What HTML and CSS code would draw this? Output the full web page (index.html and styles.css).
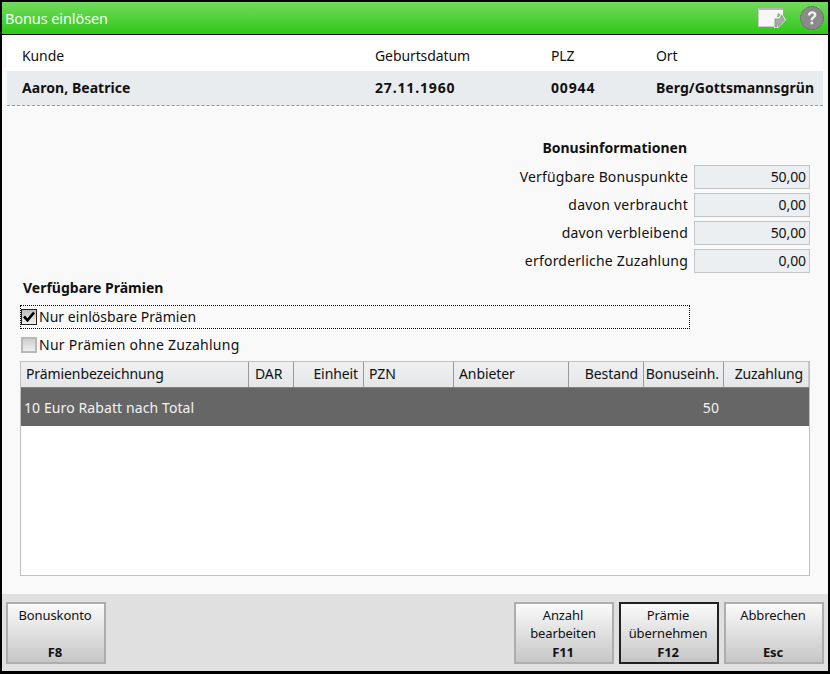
FILE: index.html
```html
<!DOCTYPE html>
<html lang="de">
<head>
<meta charset="utf-8">
<title>Bonus einlösen</title>
<link rel="stylesheet" href="styles.css">
</head>
<body>
<div class="window">
  <header class="titlebar">
    <span class="title">Bonus einlösen</span>
    <div class="title-icons">
      <svg class="ico-note" width="28" height="21" viewBox="0 0 28 21">
        <path d="M0 0H25V8L20 5 19 9H16V19H0z" fill="#f7f7f7"/>
        <path d="M0 0H25V2H0z" fill="#b4b4b4"/>
        <path d="M0 18.500H16M.5 0V19" fill="none" stroke="#c9c9c9"/>
        <path d="M16 20V9H21L23 4 28 12 20 20z" fill="#eee"/>
        <path d="M17 19V11H22L23.500 7 26.500 12 20.500 18.500 19.500 15H19V19z" fill="#a9a9a9" stroke="#8a8a8a" stroke-width=".7"/>
      </svg>
      <svg class="ico-help" width="24" height="24" viewBox="0 0 24 24">
        <circle cx="12" cy="12" r="11.500" fill="#8a8a8a" stroke="#5f5f5f" stroke-dasharray="1.500 1"/>
        <path d="M7.800 9.200C8 6.500 9.800 5.200 12.200 5.200c2.500 0 4.200 1.400 4.200 3.500 0 3-3.400 3-3.400 5.600h-2.400c0-3.600 3.200-3.600 3.200-5.400 0-.9-.7-1.500-1.700-1.500-1.100 0-1.700.7-1.800 2.300z" fill="#f0f0f0"/>
        <rect x="10.600" y="15.600" width="2.600" height="2.700" fill="#f0f0f0"/>
      </svg>
    </div>
  </header>

  <main class="content">
    <section class="customer">
      <div class="customer-head">
        <span class="c-name">Kunde</span><span class="c-date">Geburtsdatum</span><span class="c-zip">PLZ</span><span class="c-city">Ort</span>
      </div>
      <div class="customer-row">
        <span class="c-name">Aaron, Beatrice</span><span class="c-date num">27.11.1960</span><span class="c-zip num">00944</span><span class="c-city">Berg/Gottsmannsgrün</span>
      </div>
    </section>

    <section class="info">
      <h2 class="info-title">Bonusinformationen</h2>
      <div class="info-grid">
        <label class="tight">Verfügbare Bonuspunkte</label><output>50,00</output>
        <label>davon verbraucht</label><output>0,00</output>
        <label>davon verbleibend</label><output>50,00</output>
        <label>erforderliche Zuzahlung</label><output>0,00</output>
      </div>
    </section>

    <section class="rewards">
      <h2 class="rewards-title">Verfügbare Prämien</h2>
      <div class="check focused">
        <span class="box">
          <svg width="14" height="14" viewBox="0 0 14 14"><path d="M2 6.500l3.500 3.800L12 2.500" fill="none" stroke="#000" stroke-width="2.600"/></svg>
        </span>
        <span class="check-label">Nur einlösbare Prämien</span>
      </div>
      <div class="check">
        <span class="box"></span>
        <span class="check-label">Nur Prämien ohne Zuzahlung</span>
      </div>

      <div class="table">
        <div class="thead">
          <span class="col1">Prämienbezeichnung</span>
          <span class="col2">DAR</span>
          <span class="col3 r">Einheit</span>
          <span class="col4">PZN</span>
          <span class="col5">Anbieter</span>
          <span class="col6 r">Bestand</span>
          <span class="col7 r">Bonuseinh.</span>
          <span class="col8 r">Zuzahlung</span>
        </div>
        <div class="trow">
          <span class="col1">10 Euro Rabatt nach Total</span>
          <span class="col2"></span>
          <span class="col3"></span>
          <span class="col4"></span>
          <span class="col5"></span>
          <span class="col6"></span>
          <span class="col7 r">50</span>
          <span class="col8"></span>
        </div>
      </div>
    </section>
  </main>

  <footer class="footer">
    <button class="btn"><span>Bonuskonto</span><b>F8</b></button>
    <div class="spacer"></div>
    <button class="btn"><span>Anzahl<br>bearbeiten</span><b>F11</b></button>
    <button class="btn primary"><span>Prämie<br>übernehmen</span><b>F12</b></button>
    <button class="btn"><span>Abbrechen</span><b>Esc</b></button>
  </footer>
</div>
</body>
</html>
```

FILE: styles.css
```css
* { box-sizing: border-box; }
html, body { margin: 0; height: 100%; }
body {
  font-family: "Noto Sans", "Open Sans", "Liberation Sans", sans-serif;
  font-size: 14px;
  letter-spacing: -0.1px;
  color: #111;
  background: #000;
}
.window {
  width: 830px;
  height: 674px;
  border: 2px solid #000;
  border-bottom-width: 3px;
  display: flex;
  flex-direction: column;
  background: #f9f9f9;
}
.titlebar {
  height: 33px;
  flex: none;
  border-bottom: 1px solid #000;
  background: linear-gradient(#74da60, #2fc718);
  display: flex;
  align-items: center;
  justify-content: space-between;
  padding: 0 4px 1px 3px;
}
.title { color: #f4fff0; font-size: 14.5px; }
.title-icons { display: flex; align-items: center; gap: 14px; }
.ico-note, .ico-help { display: block; }
.ico-note { margin-top: 2px; }

.content { flex: 1; display: flex; flex-direction: column; min-height: 0; }
.customer {
  margin: 5px 5px 0;
  height: 68px;
  background: #fff;
  flex: none;
}
.customer-head, .customer-row {
  display: flex;
  padding-left: 15px;
  align-items: center;
}
.customer-head { height: 31px; }
.customer-row {
  height: 35px;
  padding-bottom: 2px;
  background: #e9ecef;
  font-weight: 700;
  letter-spacing: 0.05px;
  border-bottom: 1px dashed #999;
}
.c-name { width: 353px; }
.c-date { width: 176px; }
.c-zip { width: 105px; }
.c-city { white-space: nowrap; }
.num { letter-spacing: 0.85px; }

.info {
  margin-top: 30px;
  padding-right: 18px;
  display: flex;
  flex-direction: column;
  align-items: flex-end;
  flex: none;
}
.info-title {
  margin: 0 123px 7px 0;
  font-size: 14px;
  line-height: 20px;
  font-weight: 700;
  letter-spacing: 0;
}
.info-grid {
  display: grid;
  grid-template-columns: auto 116px;
  column-gap: 6px;
  row-gap: 4px;
}
.info-grid label { text-align: right; line-height: 24px; letter-spacing: 0.22px; }
.info-grid label.tight { letter-spacing: 0.13px; }
.info-grid output {
  height: 24px;
  line-height: 22px;
  text-align: right;
  background: #eceff1;
  border: 1px solid #c4c4c4;
  padding-right: 3px;
}

.rewards { padding: 5px 18px 0; display: flex; flex-direction: column; flex: 1; min-height: 0; }
.rewards-title {
  margin: 0 0 7px 3px;
  font-size: 14px;
  line-height: 20px;
  font-weight: 700;
  letter-spacing: 0;
}
.check {
  display: flex;
  align-items: center;
  gap: 2px;
  height: 24px;
  width: 670px;
  padding-left: 0;
  margin-bottom: 4px;
  border: 1px dotted transparent;
}
.check.focused { border-color: #000; }
.check-label { padding-bottom: 2px; letter-spacing: 0.25px; }
.check.focused .check-label { letter-spacing: 0.04px; }
.box {
  width: 16px;
  height: 16px;
  flex: none;
  border: 2px solid #b8b8b8;
  background: linear-gradient(#cdcdcd, #eeeeee);
  display: block;
}
.check.focused .box { border: 1px solid #222; background: linear-gradient(#bdbdbd, #efefef); }
.box svg { display: block; }

.table {
  height: 215px;
  width: 790px;
  background: #fff;
  border: 1px solid #c0c0c0;
  flex: none;
}
.thead, .trow { display: grid; grid-template-columns: 228px 45px 70px 90px 115px 75px 80px 85px; }
.thead {
  height: 26px;
  background: linear-gradient(#eef0f2, #e4e6e8);
  border-bottom: 1px solid #808080;
}
.thead span {
  line-height: 24px;
  padding: 0 5px;
  border-right: 1px solid #9a9a9a;
  white-space: nowrap;
}
.thead span:last-child { border-right-color: #c8c8c8; padding-right: 5px; }
.thead .col2 { padding-left: 6px; }
.thead .col7 { padding: 0 4px 0 0; }
.r { text-align: right; }
.trow {
  height: 38px;
  background: #666;
  color: #f2f2f2;
  line-height: 40px;
  letter-spacing: 0.1px;
}
.trow span { padding: 0 5px; white-space: nowrap; }
.trow .col1 { padding-left: 3px; }

.footer {
  height: 77px;
  flex: none;
  background: #e0e0e0;
  display: flex;
  padding: 8px 4px 7px 4px;
  gap: 5px;
}
.spacer { flex: 1; }
.btn {
  width: 100px;
  height: 62px;
  font: inherit;
  letter-spacing: inherit;
  font-size: 13px;
  line-height: 18px;
  color: #111;
  border: 2px solid #adadad;
  background: linear-gradient(#fafafa, #c6c6c6);
  padding: 2px 2px 1px 0;
  display: flex;
  flex-direction: column;
  align-items: center;
  justify-content: space-between;
  text-align: center;
}
.btn.primary { border-color: #222; }
.btn b { font-weight: 700; }
```
